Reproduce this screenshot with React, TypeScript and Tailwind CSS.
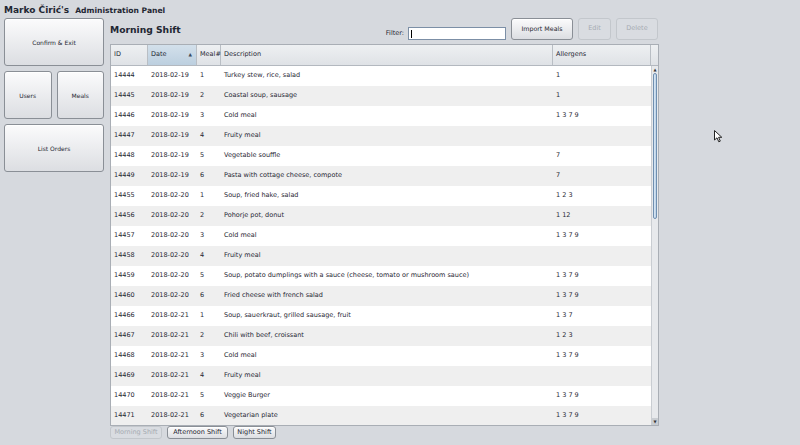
import React from "react";

const rows: [string, string, string, string, string][] = [
  ["14444", "2018-02-19", "1", "Turkey stew, rice, salad", "1"],
  ["14445", "2018-02-19", "2", "Coastal soup, sausage", "1"],
  ["14446", "2018-02-19", "3", "Cold meal", "1 3 7 9"],
  ["14447", "2018-02-19", "4", "Fruity meal", ""],
  ["14448", "2018-02-19", "5", "Vegetable souffle", "7"],
  ["14449", "2018-02-19", "6", "Pasta with cottage cheese, compote", "7"],
  ["14455", "2018-02-20", "1", "Soup, fried hake, salad", "1 2 3"],
  ["14456", "2018-02-20", "2", "Pohorje pot, donut", "1 12"],
  ["14457", "2018-02-20", "3", "Cold meal", "1 3 7 9"],
  ["14458", "2018-02-20", "4", "Fruity meal", ""],
  ["14459", "2018-02-20", "5", "Soup, potato dumplings with a sauce (cheese, tomato or mushroom sauce)", "1 3 7 9"],
  ["14460", "2018-02-20", "6", "Fried cheese with french salad", "1 3 7 9"],
  ["14466", "2018-02-21", "1", "Soup, sauerkraut, grilled sausage, fruit", "1 3 7"],
  ["14467", "2018-02-21", "2", "Chili with beef, croissant", "1 2 3"],
  ["14468", "2018-02-21", "3", "Cold meal", "1 3 7 9"],
  ["14469", "2018-02-21", "4", "Fruity meal", ""],
  ["14470", "2018-02-21", "5", "Veggie Burger", "1 3 7 9"],
  ["14471", "2018-02-21", "6", "Vegetarian plate", "1 3 7 9"],
];

const btn =
  "flex items-center justify-center rounded-[3px] border border-[#8a8f96] bg-gradient-to-b from-[#fbfbfc] to-[#dcdee2] text-[#1e2630] shadow-[inset_0_1px_0_#ffffff]";
const btnDis =
  "flex items-center justify-center rounded-[3px] border border-[#c3c7cc] bg-[#d9dce1] text-[#a6abb2]";

const colW = ["w-[37px]", "w-[49px]", "w-[24px]", "w-[332px]", "w-[98px]"];

export default function App() {
  return (
    <div
      className="relative w-[800px] h-[445px] overflow-hidden bg-[#d6d9de] text-[#1f2733]"
      style={{ fontFamily: '"DejaVu Sans", sans-serif' }}
    >
      {/* title */}
      <div className="flex items-end h-[15px] pl-[4px] gap-[6px]">
        <span className="font-bold text-[9px] leading-none">Marko Čirić's</span>
        <span className="font-bold text-[7.6px] leading-none">Administration Panel</span>
      </div>

      <div className="flex mt-[3px]">
        {/* left column */}
        <div className="ml-[4px] w-[100px] flex flex-col gap-[5px] text-[6px]">
          <div className={`${btn} h-[48px]`}>Confirm &amp; Exit</div>
          <div className="flex gap-[5px] h-[48px]">
            <div className={`${btn} flex-1`}>Users</div>
            <div className={`${btn} flex-1`}>Meals</div>
          </div>
          <div className={`${btn} h-[48px]`}>List Orders</div>
        </div>

        {/* main */}
        <div className="ml-[6px] w-[550px] flex flex-col">
          <div className="flex items-center h-[23px]">
            <span className="font-bold text-[9.2px] mt-[1px]">Morning Shift</span>
            <div className="ml-auto flex items-start text-[6.5px] h-[23px]">
              <div className="flex items-center mt-[9px]">
                <span className="mr-[4px]">Filter:</span>
                <div className="w-[98px] h-[13px] border border-[#7c8fa6] bg-white flex items-center pl-[2px]">
                  <div className="w-px h-[8px] bg-black" />
                </div>
              </div>
              <div className={`${btn} ml-[5px] w-[62px] h-[22px] text-[6.3px]`}>Import Meals</div>
              <div className={`${btnDis} ml-[5px] w-[33px] h-[22px]`}>Edit</div>
              <div className={`${btnDis} ml-[5px] w-[42px] h-[22px] mr-[2px]`}>Delete</div>
            </div>
          </div>

          {/* table */}
          <div className="mt-[3px] w-[549px] h-[382px] overflow-hidden border border-[#a9aeb5] bg-white flex flex-col text-[6.5px]">
            {/* header */}
            <div className="flex h-[21px] shrink-0 border-b border-[#b3b8bf] bg-gradient-to-b from-[#eef0f2] to-[#dfe2e6]">
              {["ID", "Date", "Meal#", "Description", "Allergens"].map((h, i) => (
                <div
                  key={h}
                  className={`${colW[i]} shrink-0 flex items-center pl-[3px] border-r border-[#b9bec4] ${
                    i === 1 ? "bg-gradient-to-b from-[#d3e0eb] to-[#bccfdf] justify-between pr-[4px]" : ""
                  }`}
                >
                  <span>{h}</span>
                  {i === 1 && <span className="text-[4.5px] text-[#3b4a5c]">▲</span>}
                </div>
              ))}
              <div className="flex-1" />
            </div>
            <div className="flex flex-1 min-h-0">
              <div className="flex flex-col w-[540px]">
                {rows.map((r, ri) => (
                  <div
                    key={r[0]}
                    className={`flex h-[20px] items-center shrink-0 ${ri % 2 ? "bg-[#efefef]" : "bg-white"}`}
                  >
                    {r.map((c, ci) => (
                      <div
                        key={ci}
                        className={`${colW[ci]} shrink-0 pl-[3px] whitespace-pre overflow-hidden`}
                      >
                        {c}
                      </div>
                    ))}
                  </div>
                ))}
              </div>
              {/* scrollbar */}
              <div className="flex-1 flex flex-col bg-[#e7e9ec] border-l border-[#c9cdd2]">
                <div className="h-[7px] flex items-center justify-center text-[4px] text-[#333]">▲</div>
                <div className="h-[146px] mx-[1px] rounded-[3px] border border-[#6f8fb0] bg-gradient-to-r from-[#dbe8f4] to-[#b9d0e6]" />
                <div className="flex-1" />
                <div className="h-[7px] flex items-center justify-center text-[4px] text-[#333] bg-[#c9cdd2]">▼</div>
              </div>
            </div>
          </div>

          {/* bottom buttons */}
          <div className="flex gap-[5px] text-[6.5px]">
            <div className={`${btnDis} w-[52px] h-[13px]`}>Morning Shift</div>
            <div className={`${btn} w-[61px] h-[13px]`}>Afternoon Shift</div>
            <div className={`${btn} w-[43px] h-[13px]`}>Night Shift</div>
          </div>
        </div>
      </div>

      {/* cursor */}
      <svg className="absolute left-[714px] top-[130px]" width="9" height="13" viewBox="0 0 9 13">
        <path d="M0.5 0.5 L0.5 10 L3 7.8 L4.8 11.8 L6.3 11.1 L4.6 7.3 L7.8 7.3 Z" fill="#fff" stroke="#222" strokeWidth="1" />
      </svg>
    </div>
  );
}
